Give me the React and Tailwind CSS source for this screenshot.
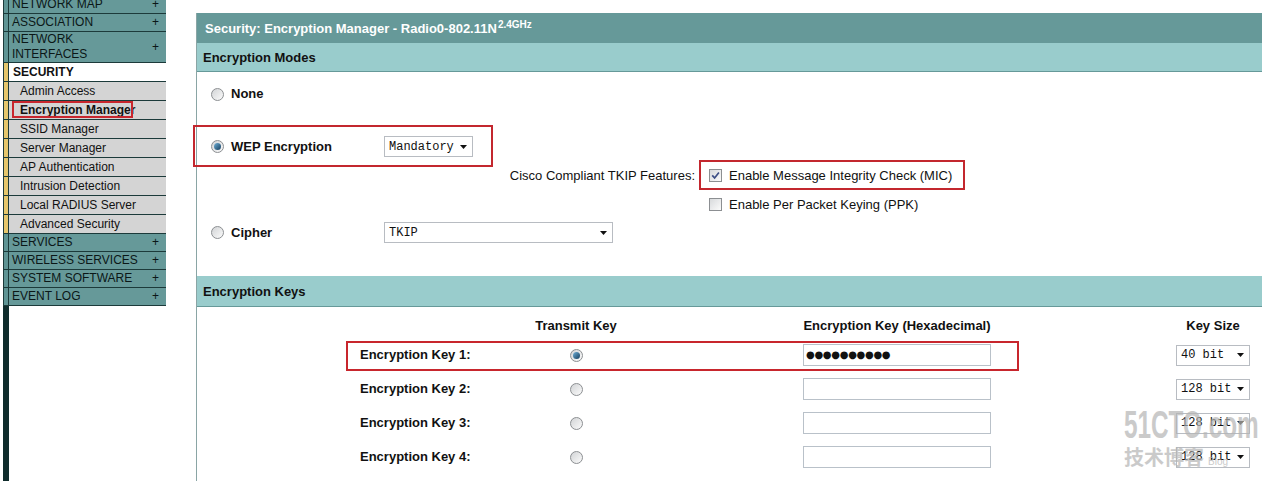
import React from "react";

function Radio({ checked }) {
  return (
    <span className="inline-flex w-[13px] h-[13px] shrink-0 rounded-full border border-[#8c8f92] bg-linear-to-br from-[#d2d4d6] to-[#fbfbfb] items-center justify-center">
      {checked && (
        <span className="w-[7px] h-[7px] rounded-full bg-linear-to-br from-[#6fb0d8] to-[#163f5e]" />
      )}
    </span>
  );
}

function Checkbox({ checked }) {
  return (
    <span className="inline-flex w-[13px] h-[13px] shrink-0 border border-[#8c8f92] bg-linear-to-br from-[#d8dadc] to-[#fbfbfb] items-center justify-center">
      {checked && (
        <svg width="9" height="9" viewBox="0 0 9 9">
          <path d="M1.2 4.4 L3.6 6.9 L7.9 1.4" stroke="#3e4f86" strokeWidth="1.7" fill="none" />
        </svg>
      )}
    </span>
  );
}

function Arrow() {
  return (
    <svg width="7" height="4" viewBox="0 0 7 4" className="shrink-0">
      <path d="M0 0 L7 0 L3.5 4 Z" fill="#111" />
    </svg>
  );
}

function Select({ className, value }) {
  return (
    <div
      className={
        "flex items-center justify-between h-[21px] border border-[#b8bcc2] bg-white pl-[4px] pr-[5px] font-['Liberation_Mono',monospace] text-[12px] text-[#111] " +
        className
      }
    >
      <span>{value}</span>
      <Arrow />
    </div>
  );
}

function TopRow({ label, label2 }) {
  return (
    <div
      className={
        "flex border-b border-[#1c3a3a] bg-[#669999] " +
        (label2 ? "h-[31px]" : "h-[18px]")
      }
    >
      <div className="w-[5px] border-r border-[#1c3a3a] bg-[#5f9494]" />
      <div className="flex-1 flex items-center justify-between pl-[3px] pr-[7px] text-[12px] leading-[15px] text-[#0b1717]">
        <span>
          {label}
          {label2 && <br />}
          {label2}
        </span>
        <span>+</span>
      </div>
    </div>
  );
}

function SubRow({ label, active }) {
  return (
    <div className="flex h-[19px] border-b border-[#1c3a3a] bg-[#d4d4d4]">
      <div className="w-[5px] border-r border-[#1c3a3a] bg-[#e6c66c]" />
      <div className="relative flex-1 flex items-center pl-[11px] text-[12px] text-[#111]">
        <span className={active ? "font-bold" : ""}>{label}</span>
        {active && (
          <div className="absolute left-[3px] top-0 w-[121px] h-[17px] border-2 border-[#c8262d]" />
        )}
      </div>
    </div>
  );
}

function Sidebar() {
  return (
    <div className="w-[166px] shrink-0 h-full flex flex-col pl-[3px]">
      <div className="flex flex-col -mt-[4px] border-l border-[#1c3a3a]">
        <TopRow label="NETWORK MAP" />
        <TopRow label="ASSOCIATION" />
        <TopRow label="NETWORK" label2="INTERFACES" />
        <div className="flex h-[19px] border-b border-[#1c3a3a] bg-white">
          <div className="w-[5px] border-r border-[#1c3a3a] bg-[#e6c66c]" />
          <div className="flex-1 flex items-center pl-[4px] text-[12px] font-bold text-[#111]">
            SECURITY
          </div>
        </div>
        <SubRow label="Admin Access" />
        <SubRow label="Encryption Manager" active />
        <SubRow label="SSID Manager" />
        <SubRow label="Server Manager" />
        <SubRow label="AP Authentication" />
        <SubRow label="Intrusion Detection" />
        <SubRow label="Local RADIUS Server" />
        <SubRow label="Advanced Security" />
        <TopRow label="SERVICES" />
        <TopRow label="WIRELESS SERVICES" />
        <TopRow label="SYSTEM SOFTWARE" />
        <TopRow label="EVENT LOG" />
      </div>
      <div className="flex-1 w-[6px] bg-[#0f2c2c]" />
    </div>
  );
}

const keyGrid =
  "grid grid-cols-[163px_150px_132px_105px_300px_117px_98px] items-center";

function KeyRow({ n, checked, size, value, boxed }) {
  return (
    <div className={"relative h-[30px] " + keyGrid}>
      <div />
      <div className="text-[13px] font-bold text-[#111]">Encryption Key {n}:</div>
      <div className="flex justify-center">
        <Radio checked={checked} />
      </div>
      <div />
      <div className="flex justify-center">
        <div className="w-[188px] h-[22px] border border-[#b9c1c9] bg-white flex items-center pl-[2px] text-[10px] tracking-[-0.3px] text-[#111] leading-none font-['DejaVu_Sans',sans-serif]">
          {value}
        </div>
      </div>
      <div />
      <div className="flex justify-center">
        <Select className="w-[74px]" value={size} />
      </div>
      {boxed && (
        <div className="absolute left-[149px] top-[1px] w-[673px] h-[30px] border-2 border-[#c8262d]" />
      )}
    </div>
  );
}

function Main() {
  return (
    <div className="flex-1 ml-[30px] mt-[13px] flex flex-col border-l border-[#8aa5a5]">
      <div className="h-[30px] shrink-0 bg-[#669999] flex items-center pl-[8px] pt-[2px] text-white text-[13px] font-bold">
        <span>
          Security: Encryption Manager - Radio0-802.11N
          <sup className="text-[10px] ml-[1px]">2.4GHz</sup>
        </span>
      </div>
      <div className="h-[29px] shrink-0 bg-[#99cccc] border-b border-[#669999] flex items-center pl-[6px] pt-[1px] text-[13px] font-bold text-[#111]">
        Encryption Modes
      </div>

      <div className="h-[43px] flex items-center pl-[14px] pt-[1px]">
        <Radio />
        <span className="ml-[7px] text-[13px] font-bold text-[#111]">None</span>
      </div>

      <div className="mt-[10px] -ml-[4px] w-[300px] h-[42px] border-2 border-[#c3272e] flex items-center pl-[16px] pt-[1px]">
        <Radio checked />
        <span className="ml-[7px] w-[153px] text-[13px] font-bold text-[#111]">WEP Encryption</span>
        <Select className="w-[89px]" value="Mandatory" />
      </div>

      <div className="-mt-[7px] h-[30px] flex items-center">
        <div className="w-[502px] text-right pr-[4px] pt-[1px] text-[13px] text-[#111]">
          Cisco Compliant TKIP Features:
        </div>
        <div className="w-[266px] h-[30px] border-2 border-[#c3272e] flex items-center pl-[8px] pt-[1px]">
          <Checkbox checked />
          <span className="ml-[7px] text-[13px] text-[#111]">Enable Message Integrity Check (MIC)</span>
        </div>
      </div>

      <div className="h-[28px] flex items-center pl-[512px] pt-[1px]">
        <Checkbox />
        <span className="ml-[7px] text-[13px] text-[#111]">Enable Per Packet Keying (PPK)</span>
      </div>

      <div className="mt-[3px] h-[22px] flex items-center pl-[14px] pt-[1px]">
        <Radio />
        <span className="ml-[7px] w-[153px] text-[13px] font-bold text-[#111]">Cipher</span>
        <Select className="w-[229px]" value="TKIP" />
      </div>

      <div className="mt-[33px] h-[31px] shrink-0 bg-[#99cccc] border-b border-[#669999] flex items-center pl-[6px] pt-[1px] text-[13px] font-bold text-[#111]">
        Encryption Keys
      </div>

      <div className={"mt-[9px] h-[20px] text-[13px] font-bold text-[#111] " + keyGrid}>
        <div />
        <div />
        <div className="text-center">Transmit Key</div>
        <div />
        <div className="text-center">Encryption Key (Hexadecimal)</div>
        <div />
        <div className="text-center">Key Size</div>
      </div>

      <div className="mt-[4px] flex flex-col gap-[4px]">
        <KeyRow n={1} checked size="40 bit" value="●●●●●●●●●●" boxed />
        <KeyRow n={2} size="128 bit" value="" />
        <KeyRow n={3} size="128 bit" value="" />
        <KeyRow n={4} size="128 bit" value="" />
      </div>
    </div>
  );
}

function Watermark() {
  return (
    <div className="absolute left-[1124px] top-[407px] pointer-events-none opacity-70 text-[#b4b4b4]">
      <div className="origin-left scale-x-[0.64] text-[38px] font-bold leading-[36px] font-['Liberation_Sans',sans-serif] whitespace-nowrap">
        51CTO.com
      </div>
      <div className="flex items-end gap-[4px] mt-[2px]">
        <span className="text-[20px] leading-[24px] font-bold font-['Noto_Sans_CJK_SC',sans-serif]">技术博客</span>
        <span className="text-[10px] leading-[14px]">Blog</span>
      </div>
    </div>
  );
}

export default function App() {
  return (
    <div className="relative w-[1262px] h-[481px] overflow-hidden bg-white flex font-['Liberation_Sans',Arial,sans-serif] text-[#111]">
      <Sidebar />
      <Main />
      <Watermark />
    </div>
  );
}
